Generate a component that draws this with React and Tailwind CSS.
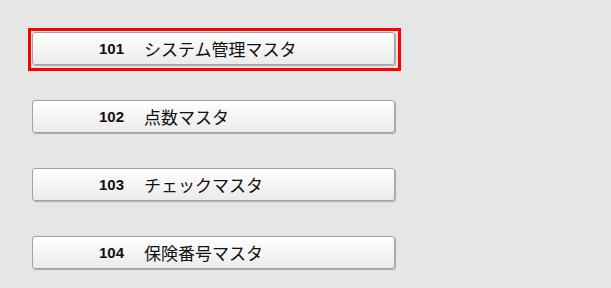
const items = [
  { code: "101", name: "システム管理マスタ", selected: true },
  { code: "102", name: "点数マスタ" },
  { code: "103", name: "チェックマスタ" },
  { code: "104", name: "保険番号マスタ" },
];

function MenuButton({ code, name, selected }) {
  return (
    <div className="relative w-[363px] h-[33px]">
      {selected && (
        <span className="absolute -left-[4px] -top-[4px] -right-[6px] -bottom-[6px] border-[3px] border-[#ff0000] pointer-events-none" />
      )}
      <button className="w-full h-full flex items-center pl-[66px] pb-[1px] rounded-[3px] border border-[#a3a3a3] bg-gradient-to-b from-[#ffffff] to-[#ebebeb] shadow-[1px_1px_1px_rgba(0,0,0,0.25)] text-[#111111]">
        <span className="w-[45px] text-left font-bold text-[15px] leading-none font-['Liberation_Sans',Arial,sans-serif]">
          {code}
        </span>
        <span className="text-[17px] font-['Noto_Sans_CJK_JP',sans-serif] leading-none">
          {name}
        </span>
      </button>
    </div>
  );
}

export default function App() {
  return (
    <div className="w-[611px] h-[288px] bg-[#e6e6e6] pl-[32px] pt-[32px] flex flex-col gap-[35px]">
      {items.map((it) => (
        <MenuButton key={it.code} {...it} />
      ))}
    </div>
  );
}
